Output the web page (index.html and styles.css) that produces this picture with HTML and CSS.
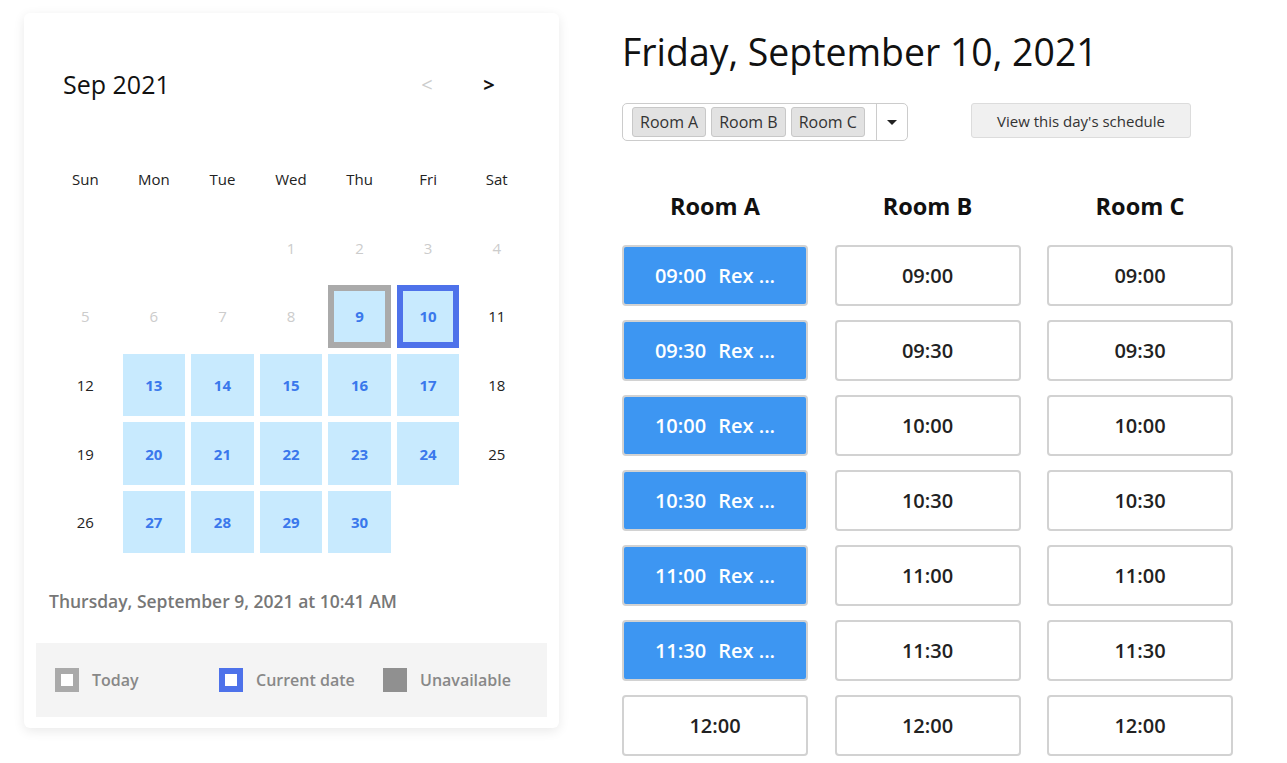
FILE: index.html
```html
<!DOCTYPE html>
<html>
<head>
<meta charset="utf-8">
<link rel="stylesheet" href="styles.css">
</head>
<body>
<div class="page">
  <div class="card">
    <div class="cal-head">
      <div class="month">Sep 2021</div>
      <div class="arrows">
        <span class="arrow disabled">&lt;</span>
        <span class="arrow">&gt;</span>
      </div>
    </div>
    <div class="grid">
      <div class="wd">Sun</div><div class="wd">Mon</div><div class="wd">Tue</div><div class="wd">Wed</div><div class="wd">Thu</div><div class="wd">Fri</div><div class="wd">Sat</div>
      <div class="d"></div><div class="d"></div><div class="d"></div>
      <div class="d past">1</div><div class="d past">2</div><div class="d past">3</div><div class="d past">4</div>
      <div class="d past">5</div><div class="d past">6</div><div class="d past">7</div><div class="d past">8</div>
      <div class="d avail today">9</div><div class="d avail current">10</div><div class="d">11</div>
      <div class="d">12</div><div class="d avail">13</div><div class="d avail">14</div><div class="d avail">15</div><div class="d avail">16</div><div class="d avail">17</div><div class="d">18</div>
      <div class="d">19</div><div class="d avail">20</div><div class="d avail">21</div><div class="d avail">22</div><div class="d avail">23</div><div class="d avail">24</div><div class="d">25</div>
      <div class="d">26</div><div class="d avail">27</div><div class="d avail">28</div><div class="d avail">29</div><div class="d avail">30</div><div class="d"></div><div class="d"></div>
    </div>
    <div class="now">Thursday, September 9, 2021 at 10:41 AM</div>
    <div class="legend">
      <div class="lg-item"><span class="sw sw-today"></span>Today</div>
      <div class="lg-item"><span class="sw sw-current"></span>Current date</div>
      <div class="lg-item"><span class="sw sw-unavail"></span>Unavailable</div>
    </div>
  </div>

  <div class="main">
    <h1 class="title">Friday, September 10, 2021</h1>
    <div class="toolbar">
      <div class="multi">
        <div class="tags">
          <span class="tag">Room A</span>
          <span class="tag">Room B</span>
          <span class="tag">Room C</span>
        </div>
        <div class="caret-box"><span class="caret"></span></div>
      </div>
      <button class="btn">View this day's schedule</button>
    </div>
    <div class="rooms">
      <div class="room">
        <div class="room-name">Room A</div>
        <div class="slot booked"><span>09:00</span><span>Rex ...</span></div>
        <div class="slot booked"><span>09:30</span><span>Rex ...</span></div>
        <div class="slot booked"><span>10:00</span><span>Rex ...</span></div>
        <div class="slot booked"><span>10:30</span><span>Rex ...</span></div>
        <div class="slot booked"><span>11:00</span><span>Rex ...</span></div>
        <div class="slot booked"><span>11:30</span><span>Rex ...</span></div>
        <div class="slot"><span>12:00</span></div>
      </div>
      <div class="room">
        <div class="room-name">Room B</div>
        <div class="slot"><span>09:00</span></div>
        <div class="slot"><span>09:30</span></div>
        <div class="slot"><span>10:00</span></div>
        <div class="slot"><span>10:30</span></div>
        <div class="slot"><span>11:00</span></div>
        <div class="slot"><span>11:30</span></div>
        <div class="slot"><span>12:00</span></div>
      </div>
      <div class="room">
        <div class="room-name">Room C</div>
        <div class="slot"><span>09:00</span></div>
        <div class="slot"><span>09:30</span></div>
        <div class="slot"><span>10:00</span></div>
        <div class="slot"><span>10:30</span></div>
        <div class="slot"><span>11:00</span></div>
        <div class="slot"><span>11:30</span></div>
        <div class="slot"><span>12:00</span></div>
      </div>
    </div>
  </div>
</div>
</body>
</html>
```
FILE: styles.css
```css
* { box-sizing: border-box; }
html, body { margin: 0; padding: 0; background: #fff; }
body {
  font-family: "Open Sans", "Noto Sans", sans-serif;
  color: #222;
}
.page {
  display: flex;
  align-items: flex-start;
  padding: 13px 0 0 24px;
  gap: 63px;
}
.card {
  width: 535px;
  height: 715px;
  background: #fff;
  border-radius: 6px;
  box-shadow: 0 3px 12px rgba(0, 0, 0, 0.09);
  padding: 46px 12px 11px 12px;
}
.cal-head {
  display: flex;
  align-items: center;
  justify-content: space-between;
  height: 50px;
  margin: 0 38px 0 18px;
  padding-left: 9px;
}
.month {
  font-size: 25px;
  color: #111;
}
.arrows { display: flex; }
.arrow {
  width: 40px;
  text-align: center;
  margin-left: 22px;
  font-size: 20px;
  font-weight: 700;
  color: #111;
}
.arrow.disabled { color: #ccc; font-weight: 400; }
.grid {
  width: 474px;
  margin: 39px 0 0 18px;
  display: grid;
  grid-template-columns: repeat(7, 1fr);
  grid-auto-rows: 62.57px;
  gap: 6px;
}
.wd, .d {
  display: flex;
  align-items: center;
  justify-content: center;
  font-size: 15px;
  color: #222;
}
.d.past { color: #ccc; }
.d.avail {
  background: #c8eafe;
  color: #3a78ec;
  font-weight: 700;
}
.d.today { border: 6px solid #aaaaaa; }
.d.current { border: 6px solid #4e72ea; }
.now {
  margin: 36px 0 0 13px;
  font-size: 17.5px;
  font-weight: 600;
  color: #777;
  line-height: 24px;
}
.legend {
  margin-top: 30px;
  height: 74px;
  background: #f4f4f4;
  display: flex;
  align-items: center;
  padding-left: 19px;
}
.lg-item {
  width: 164px;
  display: flex;
  align-items: center;
  gap: 13px;
  font-size: 16px;
  font-weight: 600;
  color: #888;
}
.sw { width: 24px; height: 24px; display: inline-block; }
.sw-today { border: 6px solid #aaa; background: #fff; }
.sw-current { border: 6px solid #4e72ea; background: #fff; }
.sw-unavail { background: #909090; }

.main { padding-top: 15px; width: 611px; }
.title {
  margin: 0;
  font-size: 37.4px;
  font-weight: 400;
  line-height: 48px;
  color: #111;
}
.toolbar {
  display: flex;
  align-items: flex-start;
  margin-top: 27px;
  gap: 63px;
}
.multi {
  display: flex;
  width: 286px;
  height: 38px;
  border: 1px solid #ccc;
  border-radius: 5px;
}
.tags {
  display: flex;
  align-items: center;
  gap: 5px;
  padding-left: 9px;
  flex: 1;
}
.tag {
  height: 30px;
  line-height: 28px;
  padding: 0 7px;
  background: #e2e2e2;
  border: 1px solid #c8c8c8;
  border-radius: 3px;
  font-size: 16px;
  color: #333;
}
.caret-box {
  width: 31px;
  border-left: 1px solid #ccc;
  display: flex;
  align-items: center;
  justify-content: center;
}
.caret {
  width: 0; height: 0;
  border-left: 5px solid transparent;
  border-right: 5px solid transparent;
  border-top: 5px solid #222;
}
.btn {
  width: 220px;
  height: 35px;
  background: #f0f0f0;
  border: 1px solid #dcdcdc;
  border-radius: 3px;
  font-family: inherit;
  font-size: 15px;
  color: #333;
}
.rooms {
  display: grid;
  grid-template-columns: repeat(3, 186px);
  column-gap: 26.5px;
  margin-top: 50px;
}
.room { display: flex; flex-direction: column; gap: 14px; }
.room-name {
  text-align: center;
  font-size: 23.5px;
  font-weight: 700;
  line-height: 30px;
  color: #111;
  margin-bottom: 10px;
}
.slot {
  height: 61px;
  border: 2px solid #d2d2d2;
  border-radius: 4px;
  display: flex;
  align-items: center;
  justify-content: center;
  gap: 12px;
  font-size: 20px;
  font-weight: 600;
  color: #222;
}
.slot.booked {
  background: #3d96f2;
  color: #fff;
}
```
